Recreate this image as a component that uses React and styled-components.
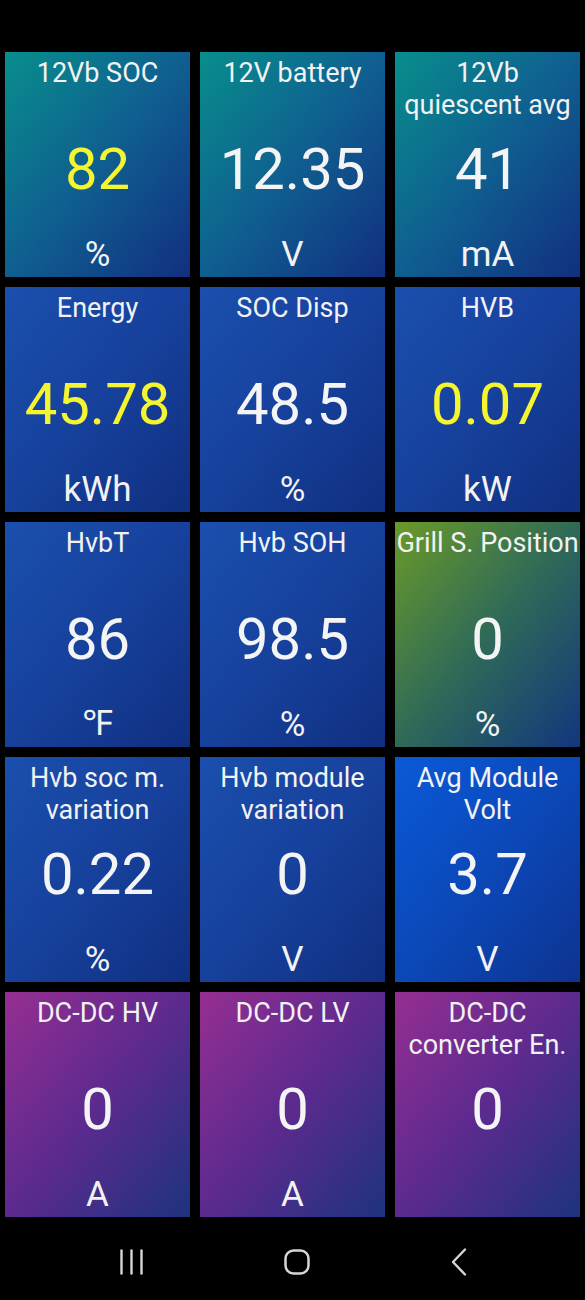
import React from 'react';
import styled, { createGlobalStyle } from 'styled-components';

const GlobalStyle = createGlobalStyle`
  html, body {
    margin: 0;
    padding: 0;
    background: #000;
  }
  body {
    font-family: Roboto, "Noto Sans", "DejaVu Sans", sans-serif;
    color: #f2f2f2;
  }
`;

const gradients = {
  teal: 'linear-gradient(to bottom right, #088e8c 0%, #0f5f90 50%, #122f80 100%)',
  blue: 'linear-gradient(to bottom right, #1b4fae 0%, #16419c 50%, #102f80 100%)',
  bright: 'linear-gradient(to bottom right, #0a5ad8 0%, #0b48b8 50%, #0e3390 100%)',
  olive: 'linear-gradient(to bottom right, #6b9a28 0%, #2f6a58 50%, #12367e 100%)',
  purple: 'linear-gradient(to bottom right, #962e92 0%, #5c2a8e 50%, #1d337e 100%)',
};

const Screen = styled.div`
  width: 585px;
  height: 1300px;
  background: #000;
  display: flex;
  flex-direction: column;
`;

const Grid = styled.div`
  display: grid;
  grid-template-columns: repeat(3, 185px);
  grid-auto-rows: 225px;
  gap: 10px;
  padding: 52px 5px 0;
`;

const Tile = styled.div`
  display: grid;
  grid-template: 1fr / 1fr;
  background: ${(p) => gradients[p.$tone]};
  padding: 5px 0 2px;
  text-align: center;
  overflow: hidden;

  & > * {
    grid-area: 1 / 1;
  }
`;

const Label = styled.div`
  align-self: start;
  font-size: 27px;
  line-height: 32px;
  white-space: pre-line;
  color: #f2f2f2;
`;

const Value = styled.div`
  align-self: center;
  margin-top: 5px;
  font-size: 58px;
  line-height: normal;
  color: ${(p) => (p.$hot ? '#f4f430' : '#f4f4f4')};
`;

const Unit = styled.div`
  align-self: end;
  font-size: 35px;
  line-height: normal;
  color: #f2f2f2;
`;

const NavBar = styled.div`
  flex: 1;
  display: flex;
  align-items: center;
  justify-content: space-between;
  padding: 6px 118px 0 120px;
  color: #d6d6d6;
`;

const tiles = [
  { label: '12Vb SOC', value: '82', unit: '%', tone: 'teal', hot: true },
  { label: '12V battery', value: '12.35', unit: 'V', tone: 'teal' },
  { label: '12Vb\nquiescent avg', value: '41', unit: 'mA', tone: 'teal' },
  { label: 'Energy', value: '45.78', unit: 'kWh', tone: 'blue', hot: true },
  { label: 'SOC Disp', value: '48.5', unit: '%', tone: 'blue' },
  { label: 'HVB', value: '0.07', unit: 'kW', tone: 'blue', hot: true },
  { label: 'HvbT', value: '86', unit: '℉', tone: 'blue' },
  { label: 'Hvb SOH', value: '98.5', unit: '%', tone: 'blue' },
  { label: 'Grill S. Position', value: '0', unit: '%', tone: 'olive' },
  { label: 'Hvb soc m.\nvariation', value: '0.22', unit: '%', tone: 'blue' },
  { label: 'Hvb module\nvariation', value: '0', unit: 'V', tone: 'blue' },
  { label: 'Avg Module\nVolt', value: '3.7', unit: 'V', tone: 'bright' },
  { label: 'DC-DC HV', value: '0', unit: 'A', tone: 'purple' },
  { label: 'DC-DC LV', value: '0', unit: 'A', tone: 'purple' },
  { label: 'DC-DC\nconverter En.', value: '0', unit: '', tone: 'purple' },
];

function RecentsIcon() {
  return (
    <svg width="23" height="26" viewBox="0 0 23 26" fill="none" stroke="currentColor" strokeWidth="2.4" strokeLinecap="round">
      <line x1="1.5" y1="1.5" x2="1.5" y2="24.5" />
      <line x1="11.5" y1="1.5" x2="11.5" y2="24.5" />
      <line x1="21.5" y1="1.5" x2="21.5" y2="24.5" />
    </svg>
  );
}

function HomeIcon() {
  return (
    <svg width="26" height="26" viewBox="0 0 26 26" fill="none" stroke="currentColor" strokeWidth="2.5">
      <rect x="1.5" y="1.5" width="23" height="23" rx="8" />
    </svg>
  );
}

function BackIcon() {
  return (
    <svg width="16" height="28" viewBox="0 0 16 28" fill="none" stroke="currentColor" strokeWidth="2.4" strokeLinecap="round" strokeLinejoin="round">
      <polyline points="14,1.5 2,14 14,26.5" />
    </svg>
  );
}

export default function App() {
  return (
    <>
      <GlobalStyle />
      <Screen>
        <Grid>
          {tiles.map((t) => (
            <Tile key={t.label} $tone={t.tone}>
              <Label>{t.label}</Label>
              <Value $hot={t.hot}>{t.value}</Value>
              <Unit>{t.unit}</Unit>
            </Tile>
          ))}
        </Grid>
        <NavBar>
          <RecentsIcon />
          <HomeIcon />
          <BackIcon />
        </NavBar>
      </Screen>
    </>
  );
}
